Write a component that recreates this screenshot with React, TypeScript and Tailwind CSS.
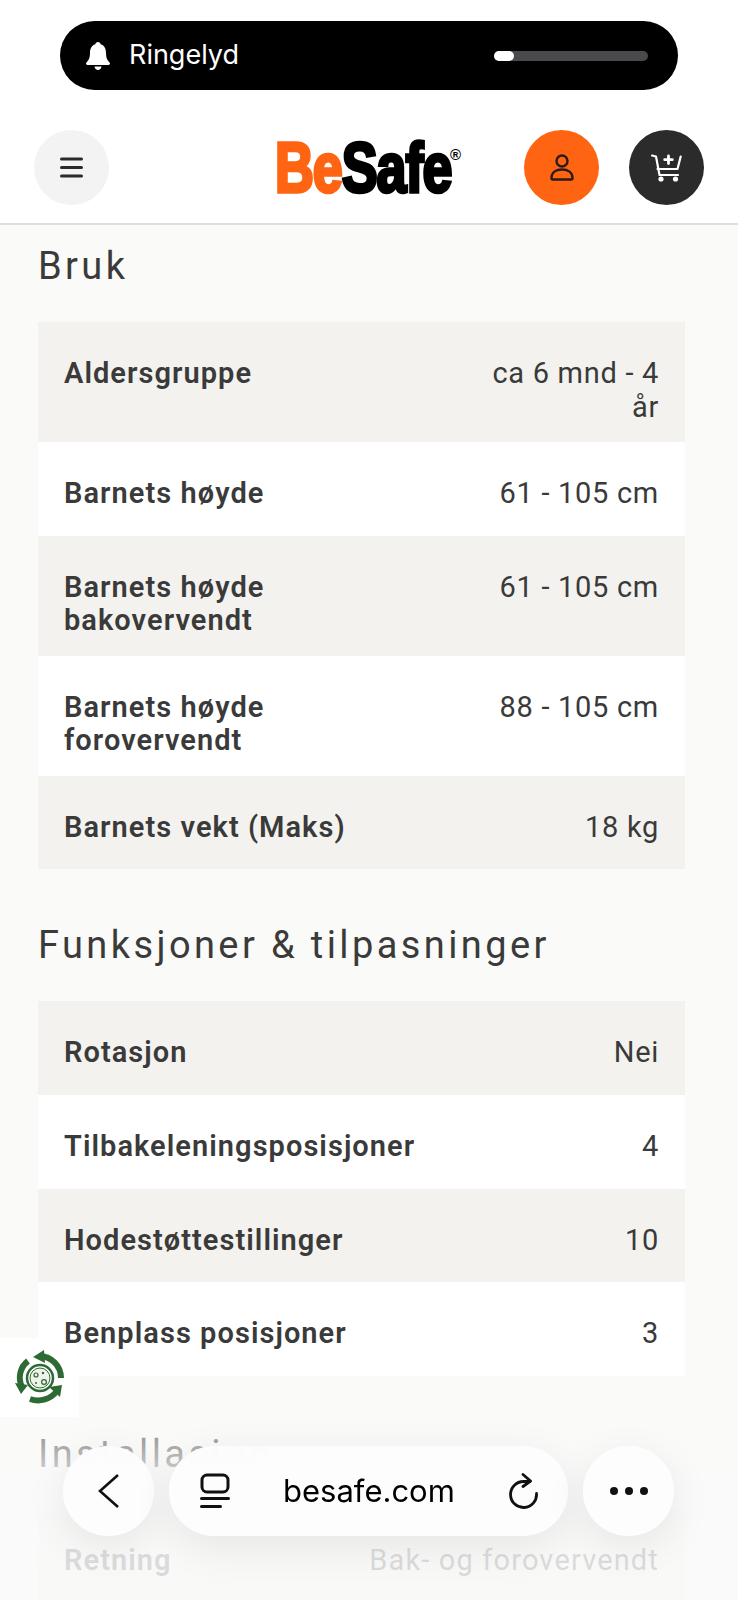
const bruk = [
  { label: "Aldersgruppe", value: "ca 6 mnd - 4 år", tall: true },
  { label: "Barnets høyde", value: "61 - 105 cm" },
  { label: "Barnets høyde bakovervendt", value: "61 - 105 cm", tall: true },
  { label: "Barnets høyde forovervendt", value: "88 - 105 cm", tall: true },
  { label: "Barnets vekt (Maks)", value: "18 kg" },
];

const funksjoner = [
  { label: "Rotasjon", value: "Nei" },
  { label: "Tilbakeleningsposisjoner", value: "4" },
  { label: "Hodestøttestillinger", value: "10" },
  { label: "Benplass posisjoner", value: "3" },
];

const installasjon = [{ label: "Retning", value: "Bak- og forovervendt", wide: true }];

function SpecTable({ rows }: { rows: { label: string; value: string; tall?: boolean; wide?: boolean }[] }) {
  return (
    <div className="mx-[38px] w-[647px]">
      {rows.map((row, i) => (
        <div
          key={row.label}
          className={`flex justify-between px-[26px] pt-[35px] text-[29px] leading-[33.5px] tracking-[0.7px] text-[#3a3a3a] ${row.tall ? "h-[120px]" : "h-[93.7px]"} ${i % 2 === 0 ? "bg-[#f3f2ee]" : "bg-white"}`}
        >
          {/* the label sits above the white badge box on the left edge */}
          <div className={`w-[290px] shrink-0 font-semibold tracking-[1.05px] ${row.wide ? "" : "relative z-10"}`}>{row.label}</div>
          <div className={`text-right ${row.wide ? "w-[305px] whitespace-nowrap tracking-[1.15px]" : "w-[190px]"}`}>{row.value}</div>
        </div>
      ))}
    </div>
  );
}

function Recycle() {
  return (
    <svg width="56" height="56" viewBox="0 0 56 56" fill="none" stroke="#2d6a34">
      <path d="M10 37 A21 21 0 0 1 16 11" strokeWidth="6" />
      <path d="M3 33 L16 35 L9 44 Z" fill="#2d6a34" stroke="none" />
      <path d="M27 6 A22 22 0 0 1 49 28" strokeWidth="6" />
      <path d="M32 0 L33 13 L21 7 Z" fill="#2d6a34" stroke="none" />
      <path d="M18 49 A24 24 0 0 0 45 41" strokeWidth="6" />
      <path d="M37 37 L50 35 L48 47 Z" fill="#2d6a34" stroke="none" />
      <circle cx="28" cy="28" r="13" strokeWidth="2.5" />
      <circle cx="28" cy="28" r="10" strokeWidth="1" fill="#eef3ea" />
      <circle cx="24" cy="25" r="2" strokeWidth="1.2" />
      <circle cx="32" cy="32" r="2.4" strokeWidth="1.2" />
      <circle cx="31" cy="23" r="1.2" fill="#2d6a34" stroke="none" />
      <circle cx="24" cy="33" r="1" fill="#2d6a34" stroke="none" />
    </svg>
  );
}

export default function App() {
  return (
    <div className="relative h-[1600px] w-[738px] overflow-hidden bg-[#fafaf8] font-['Roboto',sans-serif]">
      <header className="h-[225px] border-b-2 border-[#dedede] bg-white pt-[21px]">
        <div className="mx-[60px] flex h-[69px] w-[618px] items-center rounded-full bg-black pl-[26px] pr-[30px] text-white">
          <svg width="24" height="28" viewBox="0 0 24 28" fill="white">
            <path d="M12 0c1.500 0 2.500 1 2.700 2.300C18.500 3.500 20 7 20 11c0 4.500 1 7 3.500 9.500.8.800.5 2.500-1 2.500h-21c-1.500 0-1.800-1.700-1-2.500C3 18 4 15.500 4 11c0-4 1.500-7.500 5.300-8.700C9.500 1 10.500 0 12 0Z" />
            <path d="M8.500 24.500h7C15.200 26.800 13.800 28 12 28s-3.200-1.200-3.500-3.500Z" />
          </svg>
          <span className="ml-[19px] font-['Inter',sans-serif] text-[27px]">Ringelyd</span>
          <div className="ml-auto h-[10px] w-[154px] rounded-full bg-[#4a4a4c]">
            <div className="h-[10px] w-[20px] rounded-full bg-white" />
          </div>
        </div>
        <div className="mt-[40px] flex h-[75px] items-center pl-[34px]">
          <button className="flex h-[75px] w-[75px] items-center justify-center rounded-full bg-[#f3f3f3]">
            <svg width="23" height="21" viewBox="0 0 23 21" fill="none" stroke="#2a2a2a" strokeWidth="3" strokeLinecap="round">
              <path d="M1.500 2h20M1.500 10.500h20M1.500 19h20" />
            </svg>
          </button>
          <div className="relative ml-[166px] flex h-[75px] w-[189px] items-center font-['Liberation_Sans',sans-serif] text-[70px] font-bold leading-none tracking-[-1.4px] [-webkit-text-stroke:3.6px_currentColor]">
            <div className="flex origin-left scale-x-[0.77] whitespace-nowrap">
              <span className="text-[#ff6413]">Be</span>
              <span className="text-black">Safe</span>
            </div>
            <span className="absolute right-[3px] top-[17px] text-[15px] leading-none tracking-normal text-black [-webkit-text-stroke:0]">®</span>
          </div>
          <button className="ml-[60px] flex h-[75px] w-[75px] items-center justify-center rounded-full bg-[#ff6413]">
            <svg width="24" height="27" viewBox="0 0 24 27" fill="none" stroke="#2a1c14" strokeWidth="2.400">
              <circle cx="12" cy="7" r="5.500" />
              <path d="M1.500 24c0-5.500 4.500-8.500 10.500-8.500s10.500 3 10.500 8.500c0 .8-.5 1.500-1.200 1.500H2.700c-.7 0-1.200-.7-1.200-1.500Z" />
            </svg>
          </button>
          <button className="ml-[30px] flex h-[75px] w-[75px] items-center justify-center rounded-full bg-[#2b2b2b]">
            <svg width="31" height="28" viewBox="0 0 31 28" fill="none" stroke="white" strokeWidth="2.200" strokeLinecap="round" strokeLinejoin="round">
              <path d="M1 1.500 L5 2.500 L8.500 21 H27" />
              <path d="M29.700 2.500 L26.500 15 H6.500" />
              <path d="M17.500 2v7.500M13.700 5.700h7.600" strokeWidth="2.800" />
              <circle cx="10" cy="25" r="2.600" fill="white" stroke="none" />
              <circle cx="24.500" cy="25" r="2.600" fill="white" stroke="none" />
            </svg>
          </button>
        </div>
      </header>

      <main>
        <h2 className="ml-[38px] mt-[19px] h-[78px] text-[38px] leading-[44px] tracking-[3.4px] text-[#3a3a3a]">Bruk</h2>
        <SpecTable rows={bruk} />
        <h2 className="ml-[38px] mt-[54px] h-[78px] text-[38px] leading-[44px] tracking-[3.4px] text-[#3a3a3a]">Funksjoner &amp; tilpasninger</h2>
        <SpecTable rows={funksjoner} />
        <h2 className="ml-[38px] mt-[56px] h-[77px] text-[38px] leading-[44px] tracking-[3.4px] text-[#3a3a3a]">Installasjon</h2>
        <SpecTable rows={installasjon} />
      </main>

      <div className="absolute bottom-0 left-0 right-0 h-[230px] bg-gradient-to-b from-[#fafafa00] via-[#fafafae0] to-[#fafafad0]" />

      <div className="absolute left-0 top-[1338px] flex h-[79px] w-[79px] items-center justify-center bg-white">
        <Recycle />
      </div>

      <nav className="absolute left-[63px] top-[1446px] flex h-[90px] items-center">
        <button className="flex h-[90px] w-[91px] items-center justify-center rounded-full bg-[#fdfdfdf2] shadow-[0_10px_40px_rgba(0,0,0,0.08)] backdrop-blur-md">
          <svg width="24" height="36" viewBox="0 0 24 36" fill="none" stroke="#111" strokeWidth="2.600">
            <path d="M21 2 L3 18 L21 34" />
          </svg>
        </button>
        <div className="ml-[15px] flex h-[90px] w-[399px] items-center rounded-full bg-[#fdfdfdf2] pl-[31px] pr-[29px] shadow-[0_10px_40px_rgba(0,0,0,0.08)] backdrop-blur-md">
          <svg width="30" height="36" viewBox="0 0 30 36" fill="none" stroke="#111" strokeWidth="3" strokeLinecap="round">
            <rect x="2" y="2" width="26" height="17" rx="5" />
            <path d="M1.500 25.500h27M1.500 33.500h19" />
          </svg>
          <span className="ml-[53px] font-['Inter',sans-serif] text-[31px] text-black">besafe.com</span>
          <svg className="ml-auto" width="30" height="36" viewBox="0 0 30 36" fill="none" stroke="#111" strokeWidth="2.800" strokeLinecap="round" strokeLinejoin="round">
            <path d="M27.500 20.500 A13 13 0 1 1 14.500 8.500 H21" />
            <path d="M14 1.500 L21.500 8 L14 13.500" />
          </svg>
        </div>
        <button className="ml-[15px] flex h-[90px] w-[91px] items-center justify-center gap-[7px] rounded-full bg-[#fdfdfdf2] shadow-[0_10px_40px_rgba(0,0,0,0.08)] backdrop-blur-md">
          <span className="h-[8px] w-[8px] rounded-full bg-[#111]" />
          <span className="h-[8px] w-[8px] rounded-full bg-[#111]" />
          <span className="h-[8px] w-[8px] rounded-full bg-[#111]" />
        </button>
      </nav>
    </div>
  );
}
